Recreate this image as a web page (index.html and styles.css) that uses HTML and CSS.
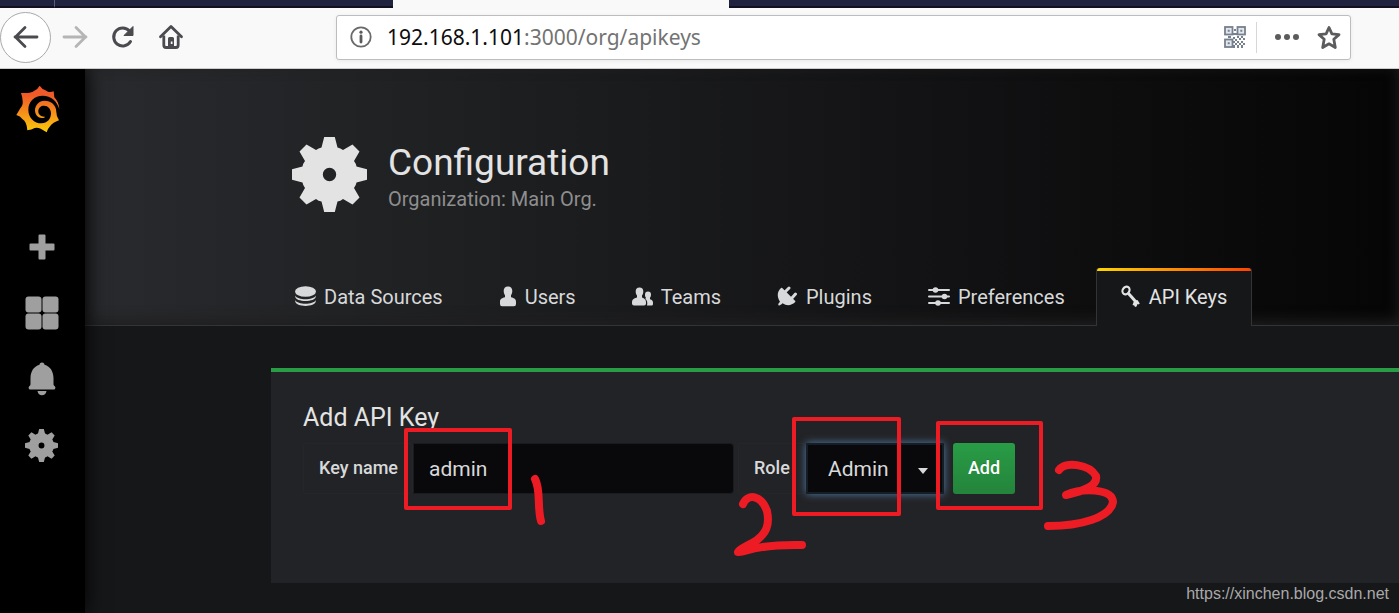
FILE: index.html
```html
<!DOCTYPE html>
<html lang="en">
<head>
<meta charset="utf-8">
<title>Configuration: API Keys</title>
<link rel="stylesheet" href="styles.css">
</head>
<body>
<svg class="defs" aria-hidden="true">
  <symbol id="gear" viewBox="-37.5 -37.5 75 75">
    <path fill-rule="evenodd" d="M-5.3-37.5H5.3L8-27Q11-26.5 13.5-24.5L23-30L30-23L24.5-13.5Q26.500-11 27-8L37.500-5.300V5.300L27 8Q26.500 11 24.500 13.500L30 23L23 30L13.500 24.500Q11 26.500 8 27L5.300 37.500H-5.300L-8 27Q-11 26.500-13.500 24.500L-23 30L-30 23L-24.500 13.500Q-26.500 11-27 8L-37.500 5.300V-5.300L-27-8Q-26.500-11-24.500-13.500L-30-23L-23-30L-13.500-24.500Q-11-26.500-8-27ZM6.700 0A6.700 6.700 0 1 0-6.700 0A6.700 6.700 0 1 0 6.700 0Z"/>
  </symbol>
</svg>

<div class="tabstrip"><div class="tab-first"></div><div class="tab-back"></div><div class="tab-current"></div><div class="tab-back tab-rest"></div></div>

<header class="toolbar">
  <div class="nav-buttons">
    <button class="nav-btn back" aria-label="Back"><svg width="26" height="24" viewBox="0 0 26 24"><path d="M2 12H24M12 2.500L2.500 12L12 21.500" fill="none" stroke="#4a4a4f" stroke-width="2.800" stroke-linecap="round" stroke-linejoin="round"/></svg></button>
    <button class="nav-btn" aria-label="Forward"><svg width="26" height="24" viewBox="0 0 26 24"><path d="M2 12H24M14 2.500L23.500 12L14 21.500" fill="none" stroke="#b5b5b6" stroke-width="2.800" stroke-linecap="round" stroke-linejoin="round"/></svg></button>
    <button class="nav-btn" aria-label="Reload"><svg width="24" height="24" viewBox="0 0 24 24"><path d="M19.500 16.500A9 9 0 1 1 18.500 6" fill="none" stroke="#4a4a4f" stroke-width="3" stroke-linecap="round"/><path d="M22 1.500V10.500H13Z" fill="#4a4a4f" stroke="#4a4a4f" stroke-linejoin="round"/></svg></button>
    <button class="nav-btn" aria-label="Home"><svg width="26" height="26" viewBox="0 0 26 26"><path d="M2.500 12.800L13 2.500L23.500 12.800" fill="none" stroke="#4a4a4f" stroke-width="2.800" stroke-linecap="round" stroke-linejoin="round"/><path d="M5.800 11.500V21Q5.800 23.500 8 23.500H18Q20.200 23.500 20.200 21V11.500" fill="none" stroke="#4a4a4f" stroke-width="2.800"/><path fill-rule="evenodd" fill="#4a4a4f" d="M10 14.500Q10 13 11.500 13H14.500Q16 13 16 14.500V23H10ZM12.800 17.500V20H14.500V17.500Z"/></svg></button>
  </div>
  <div class="urlbar">
    <svg width="22" height="22" viewBox="0 0 22 22"><circle cx="11" cy="11" r="9.700" fill="none" stroke="#6a6a6c" stroke-width="1.800"/><circle cx="11" cy="6.200" r="1.600" fill="#5a5a5c"/><path d="M11 10V16" stroke="#5a5a5c" stroke-width="2.800" stroke-linecap="round"/></svg>
    <div class="url"><span class="host">192.168.1.101</span>:3000/org/apikeys</div>
    <svg class="qr" width="22" height="22" viewBox="0 0 22 22"><g fill="#e4e7eb" stroke="#76808e" stroke-width="1.800"><rect x="1" y="1" width="7.500" height="7.500"/><rect x="13.500" y="1" width="7.500" height="7.500"/><rect x="1" y="13.500" width="7.500" height="7.500"/></g><path fill="#76808e" d="M3.700 3.700h2v2h-2zM16.300 3.700h2v2h-2zM3.700 16.300h2v2h-2zM10 3h2v2h-2zM9 7h4v2H9zM4 10h3v2H4zM9 11h2v2H9zM13 10h2v2h-2zM17 10h2v2h-2zM11 13h2v2h-2zM15 12h2v2h-2zM19 12h2v2h-2zM9 15h2v2H9zM13 15h2v2h-2zM17 15h2v2h-2zM11 17h2v2h-2zM15 17h2v2h-2zM19 17h2v2h-2zM9 19h2v3H9zM13 19h2v3h-2zM17 19h2v3h-2z"/></svg>
    <span class="divider"></span>
    <button class="icon-btn" aria-label="Page actions"><svg width="24" height="8" viewBox="0 0 24 8" fill="#5c5c5e"><circle cx="3" cy="4" r="3"/><circle cx="12" cy="4" r="3"/><circle cx="21" cy="4" r="3"/></svg></button>
    <button class="icon-btn" aria-label="Bookmark"><svg width="24" height="25" viewBox="0 0 24 25"><path d="M12 2.500L14.900 8.800L22 9.600L16.800 14.300L18.300 22.500L12 18.800L5.700 22.500L7.200 14.300L2 9.600L9.100 8.800Z" fill="none" stroke="#5c5c5e" stroke-width="2.800" stroke-linejoin="round"/></svg></button>
  </div>
</header>

<div class="app">
  <nav class="sidebar">
    <a class="logo" href="#" aria-label="Grafana home"><svg width="44" height="48" viewBox="47 43 132 144"><defs><linearGradient id="flame" x1="0" y1="0" x2="0" y2="1"><stop offset=".2" stop-color="#f05a28"/><stop offset="1" stop-color="#fbca0a"/></linearGradient></defs><path fill="url(#flame)" d="M177 116C176 101 171 89 162 80L160 62C150 66 141 64 134 58Q125 55 118 45Q112 56 102 60Q93 69 62 67Q66 77 67 92Q69 103 59 114L48 133Q60 136 66 145Q80 154 81 179Q94 177 103 172Q112 170 121 174L139 185Q141 175 148 168Q158 155 176 149Q168 138 168 124C168 103 152 90 133 90C115 90 104 104 104 119C104 134 114 142 124 142C130 142 134 140 134 138C122 139 114 132 114 122C114 111 122 105 131 105C143 105 152 115 152 128C152 145 140 158 124 158C101 158 84 141 84 117C84 93 102 75 127 75C152 75 171 92 177 116Z"/></svg></a>
    <a class="side-item" href="#" aria-label="Create"><svg width="26" height="26" viewBox="0 0 26 26"><path d="M10.500 1.500H15.500V10.500H24.500V15.500H15.500V24.500H10.500V15.500H1.500V10.500H10.500Z" fill="currentColor" stroke="currentColor" stroke-width="2" stroke-linejoin="round"/></svg></a>
    <a class="side-item" href="#" aria-label="Dashboards"><svg width="34" height="34" viewBox="0 0 34 34" fill="currentColor"><rect x=".5" y=".5" width="16" height="16" rx="3"/><rect x="17.500" y=".5" width="16" height="16" rx="3"/><rect x=".5" y="17.500" width="16" height="16" rx="3"/><rect x="17.500" y="17.500" width="16" height="16" rx="3"/></svg></a>
    <a class="side-item" href="#" aria-label="Alerting"><svg width="28" height="34" viewBox="0 0 28 34" fill="currentColor"><path d="M14 .5C15.700 .5 16.500 1.600 16.500 2.800C22.500 4.600 25.300 9.500 25.500 16V22.500Q25.700 23.800 26.800 24.200Q28 25.500 27 27Q26.500 27.500 25.500 27.500H2.500Q1.500 27.500 1 27Q0 25.500 1.200 24.200Q2.300 23.800 2.500 22.500V16C2.700 9.500 5.500 4.600 11.500 2.800C11.500 1.600 12.300 .5 14 .5ZM9.500 29H18.500C18 32 16.300 33.300 14 33.300S10 32 9.500 29Z"/></svg></a>
    <a class="side-item" href="#" aria-label="Configuration"><svg width="33" height="33" fill="currentColor"><use href="#gear"/></svg></a>
  </nav>

  <main class="main">
    <div class="page-header">
      <div class="heading">
        <svg width="75" height="75" fill="#e3e3e3"><use href="#gear"/></svg>
        <div>
          <h1>Configuration</h1>
          <p class="subtitle">Organization: Main Org.</p>
        </div>
      </div>
      <nav class="tabs">
        <a class="tab" href="#"><svg width="21" height="21" viewBox="0 0 21 21"><ellipse cx="10.500" cy="5.500" rx="10.500" ry="5.300" fill="currentColor"/><path d="M.2 9.500C2.500 14.500 18.500 14.500 20.800 9.500V10.500C20.500 16.500 .5 16.500 .2 10.500ZM.2 14C2.500 19 18.500 19 20.800 14V15C20.500 21.500 .5 21.500 .2 15Z" fill="currentColor"/></svg>Data Sources</a>
        <a class="tab" href="#"><svg width="18" height="21" viewBox="0 0 18 21"><path d="M9 .5C12 .5 13.300 2.300 13.300 5C13.300 7 12.600 8.200 12 9.200V11.300C15.500 12.300 17 13 17 16V18Q17 20.300 15 20.300H3Q1 20.300 1 18V16C1 13 2.500 12.300 6 11.300V9.200C5.400 8.200 4.700 7 4.700 5C4.700 2.300 6 .5 9 .5Z" fill="currentColor"/></svg>Users</a>
        <a class="tab" href="#"><svg width="21" height="21" viewBox="0 0 21 21" fill="currentColor"><path d="M7.500 1.500C10 1.500 11.300 3 11.300 5.500C11.300 7.300 10.800 8.500 10 9.500V11.500C12.500 12.500 14 13.500 14 16V17.500Q14 19.500 12 19.500H2Q0 19.500 0 17.500V16C0 13.500 1.500 12.500 5 11.500V9.500C4.200 8.500 3.700 7.300 3.700 5.500C3.700 3 5 1.500 7.500 1.500Z"/><path d="M16 5.500C18 5.500 19 6.700 19 8.700C19 10 18.600 11 18 11.700V13.200C20 14 21 14.700 21 17V18Q21 19.500 19.500 19.500H15C15.800 16.500 15 14 13.300 12.900L14 11.700C13.300 10.900 13 10 13 8.700C13 6.700 14 5.500 16 5.500Z"/></svg>Teams</a>
        <a class="tab" href="#"><svg width="21" height="21" viewBox="0 0 21 21"><path d="M4 2Q4.800 1.600 5.500 2.300L18 14.800Q18.700 15.500 18 16.300C14.500 19.500 10 20.200 5.500 17.300C3.800 19 2.500 20 1.500 19.300C.8 18 1.800 17 3 15.700C-.5 10.500 .3 5.500 4 2Z" fill="currentColor"/><path d="M8 6L12 2M14.500 12.500L18.500 8" stroke="currentColor" stroke-width="3" stroke-linecap="round"/></svg>Plugins</a>
        <a class="tab" href="#"><svg width="22" height="21" viewBox="0 0 22 21"><path d="M1 4H21M1 10.500H21M1 17H21" stroke="currentColor" stroke-width="2" stroke-linecap="round"/><g fill="currentColor"><circle cx="7.500" cy="4" r="2.800"/><circle cx="16.500" cy="10.500" r="2.800"/><circle cx="10" cy="17" r="2.800"/></g></svg>Preferences</a>
        <a class="tab active" href="#" aria-current="page"><svg width="20" height="24" viewBox="0 0 20 24"><ellipse cx="5" cy="5.500" rx="3.300" ry="4" transform="rotate(35 5 5.500)" fill="none" stroke="currentColor" stroke-width="2.200"/><path d="M7.500 8.500L15.500 17.500" stroke="currentColor" stroke-width="3"/><path d="M11.500 20L13 16L16.500 15L18.800 18.500L17.300 19.500L16.500 19L15.500 21.500L14 22L13.300 20.500Z" fill="currentColor"/></svg>API Keys</a>
      </nav>
    </div>

    <form class="card">
      <h2>Add API Key</h2>
      <div class="fields">
        <label class="field-label name-label" for="key-name">Key name</label>
        <input class="field-input" id="key-name" type="text" value="admin">
        <label class="field-label role-label" for="role">Role</label>
        <div class="select-wrap">
          <select class="field-select" id="role"><option>Admin</option><option>Editor</option><option>Viewer</option></select>
          <span class="caret"></span>
        </div>
        <button class="add-btn" type="button">Add</button>
      </div>
    </form>
  </main>

  <svg class="notes" width="780" height="150" viewBox="390 410 780 150" fill="none" stroke="#ed1c24" stroke-linecap="round" stroke-linejoin="round">
    <g stroke-width="4"><rect x="406" y="430" width="104" height="78"/><rect x="794" y="419" width="105" height="95"/><rect x="938" y="423" width="103" height="85"/></g>
    <g stroke-width="8"><path d="M535 479C541 490 537 507 541 521"/><path d="M743 504C748 493 761 495 767 511C770 525 766 533 757 540C748 546 739 549 738 552C747 553 750 544 802 545"/><path d="M1059 470C1065 461 1089 464 1096 476C1098 486 1084 491 1066 495C1082 488 1112 488 1113 502C1110 518 1080 526 1048 526"/></g>
  </svg>
  <div class="watermark">https://xinchen.blog.csdn.net</div>
</div>
</body>
</html>
```
FILE: styles.css
```css
* { box-sizing: border-box; }
body { margin: 0; min-height: 100vh; display: flex; flex-direction: column; background: #161719; color: #e3e3e3; font-family: Roboto, "Liberation Sans", sans-serif; overflow: hidden; }
h1, h2, p { margin: 0; font-weight: 400; }
a { color: inherit; text-decoration: none; }
button { border: 0; padding: 0; background: none; font: inherit; }
svg { display: block; flex: none; }
.defs { position: absolute; width: 0; height: 0; }

.tabstrip { display: flex; height: 8px; background: #f9f9fa; }
.tab-first, .tab-back { background: #202340; border-bottom: 2px solid #0f1022; }
.tab-first { width: 55px; border-right: 1px solid #5b5d73; }
.tab-back { width: 338px; }
.tab-current { width: 336px; }
.tab-rest { flex: 1; }

.toolbar { display: flex; align-items: center; height: 61px; padding: 0 48px 2px 0; background: #f9f9fa; border-bottom: 1px solid #ccc; }
.nav-buttons { display: flex; align-items: center; gap: 23px; width: 336px; }
.nav-btn { display: grid; place-items: center; }
.back { width: 51px; height: 51px; margin-right: -12px; border: 1px solid #a9a9ab; border-radius: 50%; background: #fff; }
.urlbar { flex: 1; display: flex; align-items: center; height: 45px; padding: 0 9px 0 13px; background: #fff; border: 1px solid #bdbdbf; border-radius: 3px; box-shadow: 0 1px 4px #0001; }
.url { flex: 1; margin-left: 15px; font: 21px/30px "Noto Sans", "Open Sans", sans-serif; color: #737373; }
.host { color: #0c0c0d; }
.divider { width: 1px; height: 31px; margin: 0 18px 0 10px; background: #d7d7db; }
.icon-btn + .icon-btn { margin-left: 18px; }

.app { position: relative; flex: 1; display: flex; overflow: hidden; }
.sidebar { position: relative; z-index: 1; width: 85px; padding: 16px 2px 0 0; background: #000; box-shadow: 0 0 20px #000; color: #9f9f9f; display: flex; flex-direction: column; align-items: center; }
.logo { margin: 0 8px 81px 0; }
.side-item { display: grid; place-items: center; width: 83px; height: 66px; }

.main { flex: 1; min-width: 0; }
.page-header { padding: 68px 0 0 185px; background: linear-gradient(90deg, #292a2d, #000 115%); box-shadow: inset 0 -4px 14px #1f1f20; border-bottom: 1px solid #333435; }
.heading { display: flex; gap: 21px; padding-left: 22px; }
h1 { margin-top: 4px; font-size: 37px; line-height: 44px; }
.subtitle { font-size: 20px; line-height: 28px; color: #8e8e8e; }
.tabs { display: flex; gap: 6px; margin: 55px 0 -1px; }
.tab { display: flex; align-items: center; gap: 8px; height: 58px; padding: 0 24px 2px; border: 1px solid transparent; border-bottom: 0; font-size: 20px; color: #d8d9da; white-space: nowrap; }
.active { position: relative; background: #161719; border-color: #333435; border-radius: 3px 3px 0 0; color: #e3e3e3; }
.active::before { content: ""; position: absolute; top: -1px; left: 0; right: 0; height: 3px; border-radius: 3px 3px 0 0; background: linear-gradient(90deg, #ffd500, #ff4400); }

.card { margin: 42px 0 30px 186px; height: 215px; padding: 29px 32px; border-top: 4px solid #299c46; background: #222326; }
h2 { font-size: 25px; line-height: 34px; margin-bottom: 8px; }
.fields { display: flex; height: 51px; }
.field-label { display: flex; align-items: center; padding: 0 0 2px 15px; border: 1px solid #262628; border-radius: 3px; font-size: 18px; font-weight: 500; color: #d8d9da; }
.name-label { width: 110px; }
.role-label { width: 68px; margin-left: 4px; }
.field-input { width: 321px; padding: 0 15px; border: 1px solid #1b1b1d; border-radius: 0 4px 4px 0; background: #09090b; color: #d8d9da; font: 21px/30px Roboto, sans-serif; }
.select-wrap { position: relative; width: 138px; margin-right: 9px; }
.field-select { appearance: none; width: 100%; height: 51px; padding: 0 20px; border: 2px solid #151d27; border-radius: 1px; background: #09090b; color: #d8d9da; font: 21px/30px Roboto, sans-serif; box-shadow: 0 0 8px #527ba3; }
.caret { position: absolute; right: 16px; top: 25px; border: 5px solid transparent; border-top: 6px solid #d8d9da; border-bottom: 0; pointer-events: none; }
.add-btn { width: 62px; padding-bottom: 2px; border-radius: 3px; background: linear-gradient(#299c46, #23843b); color: #fff; font-size: 18px; font-weight: 500; text-shadow: 0 -1px 0 #0002; }

.notes { position: absolute; z-index: 2; left: 390px; top: 341px; pointer-events: none; }
.watermark { position: absolute; right: 10px; bottom: 9px; font: 16px/20px "Liberation Sans", Arial, sans-serif; color: #a9a9aa; }
```
